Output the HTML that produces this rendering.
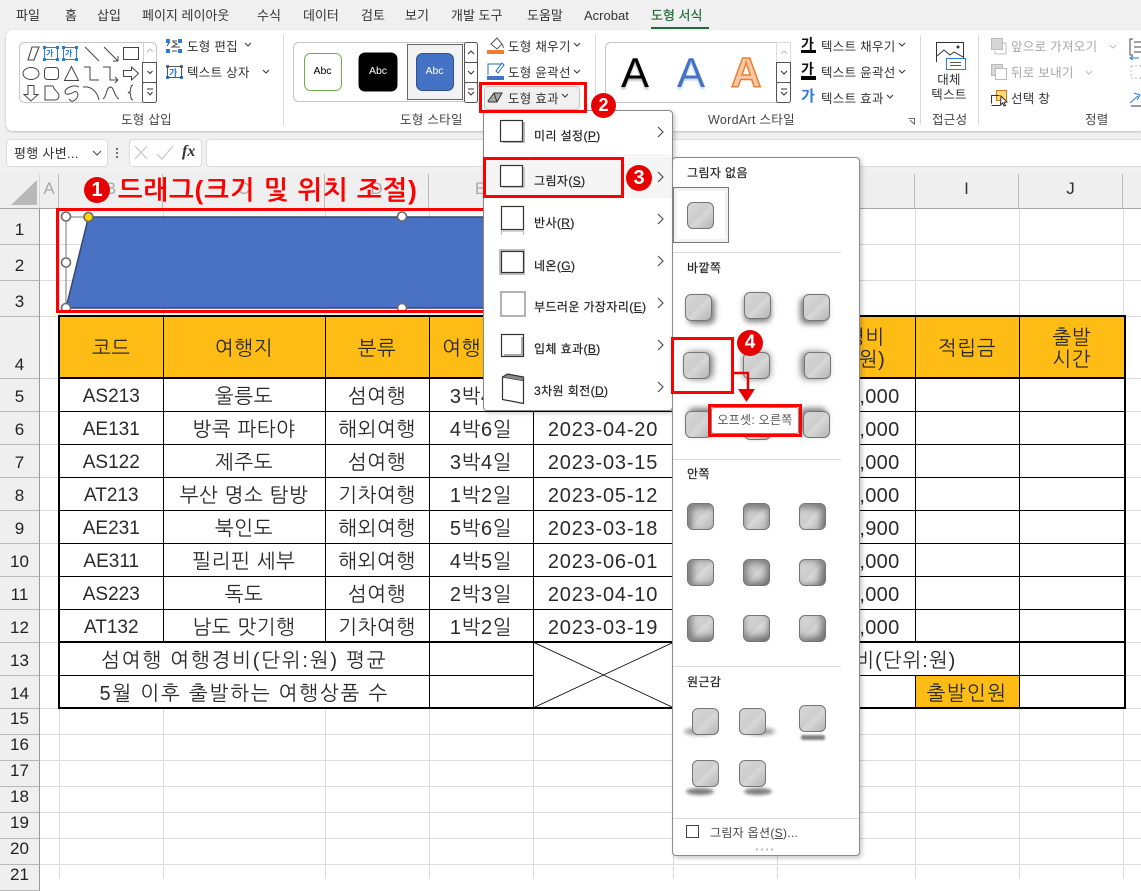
<!DOCTYPE html>
<html lang="ko"><head><meta charset="utf-8"><title>Excel</title>
<style>
*{box-sizing:border-box}
html,body{margin:0;padding:0}
body{width:1141px;height:879px;overflow:hidden;position:relative;background:#fff;font-family:"Liberation Sans","Noto Sans CJK KR",sans-serif;color:#333}
.a{position:absolute;white-space:nowrap}
.tab{position:absolute;top:7px;font-size:13px;line-height:18px;color:#333;white-space:nowrap}
.r{position:absolute;font-size:12.5px;line-height:16px;color:#333;white-space:nowrap;letter-spacing:.3px;margin-top:1px}
.lbl{position:absolute;top:112px;font-size:12.5px;line-height:16px;color:#444;white-space:nowrap;letter-spacing:.3px}
.dis{color:#a8a8a8}
.rh{position:absolute;left:0;width:40px;background:#efefef;border-bottom:1px solid #b8b8b8;border-right:1px solid #999;text-align:center;font-size:17px;color:#222;display:flex;align-items:center;justify-content:center;padding-top:3px}
.rt{padding-top:6px}
.rb{padding-top:0;padding-bottom:5px}
.ch{position:absolute;top:174px;height:34px;border-right:1px solid #bbb;text-align:center;font-size:17px;line-height:30px;color:#aaa}
table{position:absolute;left:58px;top:315px;width:1066px;border-collapse:collapse;table-layout:fixed;font-family:"Liberation Sans","NanumGothic","Noto Sans CJK KR",sans-serif;font-size:20px;color:#2a2a2a;background:#fff;border:2px solid #000;letter-spacing:.6px}
td{border:1px solid #000;text-align:center;padding:5px 0 0;height:33px;overflow:hidden;white-space:nowrap;line-height:22px}
tr.h td{height:62px;background:#FEBC14;padding-top:4px}
tr.h2 td{border-bottom:2px solid #000}
td.c{font-size:19px;letter-spacing:0}
td.d{letter-spacing:.8px}
td.n{text-align:right;padding-right:15px;letter-spacing:.3px}
td.w{letter-spacing:1.8px}
.menu{position:absolute;background:#fff;border:1px solid #8a8a8a;border-radius:4px;box-shadow:2px 2px 5px rgba(0,0,0,.22)}
.mt{position:absolute;left:534px;font-size:12px;line-height:16px;color:#222;white-space:nowrap;letter-spacing:.4px;-webkit-text-stroke:.2px #222}
.mt u{text-underline-offset:1px}
.sh{position:absolute;width:27px;height:27px;border:1.5px solid #757575;border-radius:6px;background:linear-gradient(135deg,#d8d8d8 0%,#cdcdcd 45%,#d8d8d8 55%,#b4b4b4 100%)}
.st{position:absolute;left:687px;font-size:12px;line-height:16px;color:#222;letter-spacing:.4px;-webkit-text-stroke:.2px #222;white-space:nowrap}
.sep{position:absolute;background:#d9d9d9;height:1px}
.badge{position:absolute;border-radius:50%;background:#e60000;color:#fff;font-weight:bold;text-align:center;font-family:"Liberation Sans",sans-serif}
</style></head><body>

<!-- top ribbon background -->
<div class="a" style="left:0;top:0;width:1141px;height:172px;background:#f0f0f0"></div>
<span class="tab" style="left:16px">파일</span>
<span class="tab" style="left:65px">홈</span>
<span class="tab" style="left:97px">삽입</span>
<span class="tab" style="left:142px">페이지 레이아웃</span>
<span class="tab" style="left:257px">수식</span>
<span class="tab" style="left:303px">데이터</span>
<span class="tab" style="left:361px">검토</span>
<span class="tab" style="left:405px">보기</span>
<span class="tab" style="left:451px">개발 도구</span>
<span class="tab" style="left:527px">도움말</span>
<span class="tab" style="left:584px">Acrobat</span>
<span class="tab" style="left:651px;color:#1f6b3a;-webkit-text-stroke:.2px #1f6b3a">도형 서식</span>
<div class="a" style="left:651px;top:27px;width:58px;height:2px;background:#1f6b3a"></div>

<div class="a" style="left:6px;top:30px;width:1140px;height:101px;background:#fff;border-radius:7px;box-shadow:0 1px 2px rgba(0,0,0,.2)"></div>

<!-- ribbon icons -->
<svg class="a" style="left:0;top:0" width="1141" height="135" viewBox="0 0 1141 135" fill="none" stroke="#444" stroke-width="1">
<rect x="19.5" y="42.5" width="137" height="60" rx="5" fill="#fff" stroke="#c6c6c6"/>
<path d="M143.5 43v59" stroke="#d0d0d0"/>
<rect x="142.5" y="62.5" width="14" height="20" stroke="#555" fill="#fff"/><rect x="142.5" y="82.5" width="14" height="20" rx="2" stroke="#555" fill="#fff"/>
<path d="M147 52l3-3 3 3" stroke="#bbb"/><path d="M147.500 71l2.500 2.500 2.500-2.500" stroke="#333"/><path d="M147 89h6M147.500 92l2.500 3 2.500-3" stroke="#333"/>
<path d="M28 60l4-13h7l-5 13z" stroke-width="1.1"/>
<rect x="44.500" y="47.500" width="13" height="12" stroke="#2b7cd3" stroke-width="1"/><rect x="63.500" y="47.500" width="13" height="12" stroke="#2b7cd3"/>
<path d="M85 47l14 14M104 47l14 14M118 61v-5M118 61h-5"/><rect x="123.500" y="47.500" width="15" height="12"/>
<ellipse cx="31" cy="73.500" rx="8" ry="6"/><rect x="44.500" y="67.500" width="14" height="12" rx="3"/>
<path d="M64.500 80.500l7-14 7 14z"/><path d="M84 67h6v13h9M103 67h7v13h8M118 80l-3-3M118 80l-3 3"/>
<path d="M123.500 70.500h8v-3.500l7 6.500-7 6.500v-3.500h-8z"/>
<path d="M28 85.500h6v9h4l-7 6.500-7-6.500h4z"/><path d="M45 100V86h8c1 4 5 6 6 9 0 4-2 5-4 5z"/>
<path d="M79 87c-5-3-14 1-14 5s6 2 9 0 6 3 2 7-5 2-7 0"/><path d="M83 87c8-1 14 4 16 13"/><path d="M103 99c4-3 3-11 7-12s4 10 9 12"/>
<path d="M133 85c-3 0-2 6-3 7l-2 .5 2 .5c1 1 0 7 3 7"/>
<g fill="#2b7cd3" stroke="none"><rect x="43" y="46" width="3" height="3"/><rect x="56" y="46" width="3" height="3"/><rect x="43" y="58" width="3" height="3"/><rect x="56" y="58" width="3" height="3"/><rect x="62" y="46" width="3" height="3"/><rect x="75" y="46" width="3" height="3"/><rect x="62" y="58" width="3" height="3"/><rect x="75" y="58" width="3" height="3"/>
<rect x="166" y="39" width="4" height="4"/><rect x="178" y="39" width="4" height="4"/><rect x="166" y="49" width="4" height="4"/><rect x="178" y="49" width="4" height="4"/>
<rect x="166" y="65" width="3" height="3"/><rect x="180" y="65" width="3" height="3"/><rect x="166" y="76" width="3" height="3"/><rect x="180" y="76" width="3" height="3"/></g>
<path d="M172 41h5M167 46l2-3M180 47h-8l5-3-4-2M172 51h5" stroke="#444"/><rect x="167.500" y="66.500" width="14" height="11" stroke="#555"/>
<path d="M245 43l3 3 3-3M263 70l3 3 3-3" stroke="#333"/>
<path d="M283.500 35v90M595.500 35v90M920.500 35v90M978.500 35v90" stroke="#d9d9d9"/>
<rect x="293.500" y="42.500" width="184" height="59" rx="5" stroke="#c6c6c6" fill="#fff"/>
<rect x="407.500" y="44.500" width="55" height="55" stroke="#666" fill="#f3f3f3"/>
<rect x="304.500" y="53.500" width="37" height="37" rx="6" fill="#fff" stroke="#70ad47"/>
<rect x="359" y="53" width="38" height="38" rx="6" fill="#000" stroke="#000"/>
<rect x="416.500" y="53.500" width="37" height="37" rx="6" fill="#4472c4" stroke="#2f528f"/>
<rect x="464.500" y="42.500" width="13" height="20" rx="2" fill="#fff" stroke="#555"/><rect x="464.500" y="62.500" width="13" height="20" fill="#fff" stroke="#555"/><rect x="464.500" y="82.500" width="13" height="20" rx="2" fill="#fff" stroke="#555"/>
<path d="M468 54l3-3 3 3M468 71l3 3 3-3M468 89h6M468 92l3 3 3-3" stroke="#333"/>
<path d="M491 44l6-6 5 6-5 5z" stroke="#555"/><path d="M502 44c1 2 2 3 1 4" stroke="#555"/><rect x="487" y="50" width="17" height="4" fill="#ed7d31" stroke="none"/>
<path d="M488 75V64h13M498 73l6-8-2-2-6 8z" stroke="#2b6cb8"/><rect x="487" y="76" width="17" height="4" fill="#4472c4" stroke="none"/>
<path d="M574 43l3 3 3-3M574 70l3 3 3-3" stroke="#333"/>
<rect x="605.500" y="42.500" width="185" height="60" rx="5" fill="#fff" stroke="#c6c6c6"/>
<rect x="776.500" y="42.500" width="14" height="20" fill="#fff" stroke="#ddd"/><rect x="776.500" y="62.500" width="14" height="20" fill="#fff" stroke="#555"/><rect x="776.500" y="82.500" width="14" height="20" rx="2" fill="#fff" stroke="#555"/>
<path d="M781 54l3-3 3 3" stroke="#bbb"/><path d="M781 71l3 3 3-3M781 89h6M781 92l3 3 3-3" stroke="#333"/>
<rect x="801" y="50" width="15" height="3" fill="#000" stroke="none"/><rect x="801" y="76" width="15" height="4" fill="#000" stroke="none"/>
<path d="M899 43l3 3 3-3M899 70l3 3 3-3M887 95l3 3 3-3" stroke="#333"/>
<path d="M908.500 118.500h6v6M910 120l4 4" stroke="#666"/>
<path d="M936.500 62V42.500h27V59" stroke="#333"/><path d="M937 56l7-6 6 5 4-3 9 5" stroke="#333"/><circle cx="958" cy="47" r="1.500" fill="#333" stroke="none"/>
<rect x="946.500" y="58.500" width="19" height="11" fill="#fff" stroke="#2b7cd3"/><path d="M950 62.500h11M950 65.500h11" stroke="#555"/>
<rect x="991.500" y="38.500" width="11" height="11" fill="#d6d6d6" stroke="#bcbcbc"/><path d="M1003 43h3v11h-11v-3" stroke="#bcbcbc"/>
<rect x="991.500" y="64.500" width="11" height="11" fill="#d6d6d6" stroke="#bcbcbc"/><rect x="995.500" y="68.500" width="11" height="11" fill="#fff" stroke="#bcbcbc"/>
<path d="M1110 45l3 3 3-3M1086 71l3 3 3-3" stroke="#bcbcbc"/>
<rect x="996.500" y="90.500" width="10" height="10" fill="#ffd97a" stroke="#d27b1d"/><path d="M991.500 103.500v-8h8M991.500 105.500h9" stroke="#333"/><path d="M1001 96l6 6-3 .5 1.500 3-1.500.5-1.500-3-2 2z" fill="#fff" stroke="#333"/>
<path d="M1133 39h-3v16h3M1134 42h7M1134 47h7M1134 52h7" stroke="#444"/><path d="M1130 58h9M1133 56l-3 2 3 2" stroke="#2b7cd3"/>
<path d="M1131 66h10M1131 78h10M1131 66v12" stroke="#bbb" stroke-dasharray="2 2"/>
<path d="M1130 103l8-7M1134 93l6 2-3 5" stroke="#2b7cd3"/><path d="M1131 106h10" stroke="#333"/>
</svg>

<span class="a" style="left:46px;top:48px;width:12px;font-size:8px;color:#2b7cd3;font-weight:bold">가</span>
<span class="a" style="left:65px;top:48px;width:12px;font-size:8px;color:#2b7cd3;font-weight:bold">가</span>
<span class="a" style="left:169px;top:66px;font-size:9px;color:#2b7cd3;font-weight:bold">가</span>

<span class="r" style="left:187px;top:38px">도형 편집</span>
<span class="r" style="left:187px;top:64px">텍스트 상자</span>
<span class="lbl" style="left:121px">도형 삽입</span>

<span class="a" style="left:304px;top:64px;width:37px;text-align:center;font-size:10.500px;color:#000;line-height:14px">Abc</span>
<span class="a" style="left:359px;top:64px;width:38px;text-align:center;font-size:10.500px;color:#fff;line-height:14px">Abc</span>
<span class="a" style="left:416px;top:64px;width:37px;text-align:center;font-size:10.500px;color:#fff;line-height:14px">Abc</span>
<span class="r" style="left:508px;top:38px">도형 채우기</span>
<span class="r" style="left:508px;top:64px">도형 윤곽선</span>
<span class="lbl" style="left:400px">도형 스타일</span>

<span class="a" style="left:620px;top:49px;width:30px;text-align:center;font-size:42px;line-height:48px;color:#000;text-shadow:0 2px 2px rgba(0,0,0,.3)">A</span>
<span class="a" style="left:676px;top:49px;width:30px;text-align:center;font-size:42px;line-height:48px;color:#4472c4;text-shadow:0 2px 2px rgba(68,114,196,.3)">A</span>
<span class="a" style="left:731px;top:49px;width:30px;text-align:center;font-size:42px;line-height:48px;color:#f8c9a4;-webkit-text-stroke:1.5px #ed7d31;font-weight:bold">A</span>
<span class="a" style="left:801px;top:37px;font-size:14px;line-height:15px;color:#111;font-weight:bold">가</span>
<span class="a" style="left:801px;top:62px;font-size:14px;line-height:15px;color:#111;font-weight:bold">가</span>
<span class="a" style="left:801px;top:89px;font-size:15px;line-height:16px;color:#2b7cd3;font-weight:bold">가</span>
<span class="r" style="left:821px;top:38px">텍스트 채우기</span>
<span class="r" style="left:821px;top:64px">텍스트 윤곽선</span>
<span class="r" style="left:821px;top:90px">텍스트 효과</span>
<span class="lbl" style="left:708px">WordArt 스타일</span>

<span class="r" style="left:925px;top:71px;width:48px;text-align:center">대체</span>
<span class="r" style="left:925px;top:86px;width:48px;text-align:center">텍스트</span>
<span class="lbl" style="left:932px">접근성</span>
<span class="r dis" style="left:1011px;top:38px">앞으로 가져오기</span>
<span class="r dis" style="left:1011px;top:64px">뒤로 보내기</span>
<span class="r" style="left:1011px;top:90px">선택 창</span>
<span class="lbl" style="left:1085px">정렬</span>

<!-- formula bar -->
<div class="a" style="left:6px;top:139px;width:102px;height:28px;background:#fff;border:1px solid #dcdcdc;border-radius:4px"></div>
<span class="a" style="left:14px;top:145px;font-size:13px;line-height:18px;color:#333;letter-spacing:.3px">평행 사변...</span>
<svg class="a" style="left:90px;top:148px" width="14" height="10" fill="none" stroke="#444"><path d="M3 3l4 4 4-4"/></svg>
<svg class="a" style="left:115px;top:146px" width="4" height="14"><circle cx="2" cy="3" r="1" fill="#444"/><circle cx="2" cy="7" r="1" fill="#444"/><circle cx="2" cy="11" r="1" fill="#444"/></svg>
<div class="a" style="left:129px;top:139px;width:73px;height:28px;background:#fff;border:1px solid #dcdcdc;border-radius:4px"></div>
<svg class="a" style="left:130px;top:142px" width="50" height="22" fill="none" stroke="#c4c4c4" stroke-width="1.200"><path d="M5 4l12 13M17 4L5 17M27 12l5 5 11-13"/></svg>
<span class="a" style="left:182px;top:142px;font-family:'Liberation Serif',serif;font-style:italic;font-weight:bold;font-size:16px;line-height:20px;color:#333">fx</span>
<div class="a" style="left:206px;top:139px;width:940px;height:28px;background:#fff;border:1px solid #dcdcdc;border-radius:4px"></div>

<!-- column headers -->
<div class="a" style="left:0;top:172px;width:1141px;height:37px;background:#efefef;border-bottom:1px solid #a8a8a8"></div>
<svg class="a" style="left:0;top:172px" width="40" height="36"><path d="M11 33L37 8v25z" fill="#b8b8b8"/><path d="M40 2v34" stroke="#c0c0c0"/></svg>
<div class="ch" style="left:40px;width:19px">A</div>
<div class="ch" style="left:59px;width:104px">B</div>
<div class="ch" style="left:163px;width:162px">C</div>
<div class="ch" style="left:325px;width:104px">D</div>
<div class="ch" style="left:429px;width:104px">E</div>
<div class="ch" style="left:777px;width:138px;color:#333">H</div>
<div class="ch" style="left:915px;width:104px;color:#333">I</div>
<div class="ch" style="left:1019px;width:104px;color:#333">J</div>

<!-- grid -->
<svg class="a" style="left:0;top:209px" width="1141" height="670" fill="none" stroke="#dcdcdc">
<path d="M0 35.500h1141M0 71.500h1141M0 107.500h1141M0 169.500h1141M0 202.500h1141M0 235.500h1141M0 268.500h1141M0 301.500h1141M0 334.500h1141M0 367.500h1141M0 400.500h1141M0 433.500h1141M0 466.500h1141M0 499.500h1141M0 525.500h1141M0 551.500h1141M0 577.500h1141M0 603.500h1141M0 629.500h1141M0 655.500h1141"/>
<path d="M59.500 0v670M163.500 0v670M325.500 0v670M429.500 0v670M533.500 0v670M673.500 0v670M777.500 0v670M915.500 0v670M1019.500 0v670M1123.500 0v670"/>
</svg>

<!-- row headers -->
<div class="rh rt" style="top:209px;height:36px">1</div>
<div class="rh rt" style="top:245px;height:36px">2</div>
<div class="rh rt" style="top:281px;height:36px">3</div>
<div class="rh" style="top:317px;height:62px;align-items:flex-end;padding-top:0;padding-bottom:3px">4</div>
<div class="rh" style="top:379px;height:33px">5</div>
<div class="rh" style="top:412px;height:33px">6</div>
<div class="rh" style="top:445px;height:33px">7</div>
<div class="rh" style="top:478px;height:33px">8</div>
<div class="rh" style="top:511px;height:33px">9</div>
<div class="rh" style="top:544px;height:33px">10</div>
<div class="rh" style="top:577px;height:33px">11</div>
<div class="rh" style="top:610px;height:33px">12</div>
<div class="rh" style="top:643px;height:33px">13</div>
<div class="rh" style="top:676px;height:33px">14</div>
<div class="rh rb" style="top:709px;height:26px">15</div>
<div class="rh rb" style="top:735px;height:26px">16</div>
<div class="rh rb" style="top:761px;height:26px">17</div>
<div class="rh rb" style="top:787px;height:26px">18</div>
<div class="rh rb" style="top:813px;height:26px">19</div>
<div class="rh rb" style="top:839px;height:26px">20</div>
<div class="rh rb" style="top:865px;height:26px">21</div>

<!-- table -->
<table>
<colgroup><col style="width:104px"><col style="width:162px"><col style="width:104px"><col style="width:104px"><col style="width:140px"><col style="width:104px"><col style="width:138px"><col style="width:104px"><col style="width:106px"></colgroup>
<tr class="h h2"><td>코드</td><td>여행지</td><td>분류</td><td>여행기간</td><td>출발일</td><td>인원</td><td>여행경비<br>(단위:원)</td><td>적립금</td><td>출발<br>시간</td></tr>
<tr><td class="c">AS213</td><td>울릉도</td><td>섬여행</td><td>3박4일</td><td class="d">2023-04-20</td><td>20</td><td class="n">550,000</td><td></td><td></td></tr>
<tr><td class="c">AE131</td><td>방콕 파타야</td><td>해외여행</td><td>4박6일</td><td class="d">2023-04-20</td><td>20</td><td class="n">850,000</td><td></td><td></td></tr>
<tr><td class="c">AS122</td><td>제주도</td><td>섬여행</td><td>3박4일</td><td class="d">2023-03-15</td><td>20</td><td class="n">650,000</td><td></td><td></td></tr>
<tr><td class="c">AT213</td><td>부산 명소 탐방</td><td>기차여행</td><td>1박2일</td><td class="d">2023-05-12</td><td>20</td><td class="n">250,000</td><td></td><td></td></tr>
<tr><td class="c">AE231</td><td>북인도</td><td>해외여행</td><td>5박6일</td><td class="d">2023-03-18</td><td>20</td><td class="n">850,900</td><td></td><td></td></tr>
<tr><td class="c">AE311</td><td>필리핀 세부</td><td>해외여행</td><td>4박5일</td><td class="d">2023-06-01</td><td>20</td><td class="n">750,000</td><td></td><td></td></tr>
<tr><td class="c">AS223</td><td>독도</td><td>섬여행</td><td>2박3일</td><td class="d">2023-04-10</td><td>20</td><td class="n">550,000</td><td></td><td></td></tr>
<tr class="h2"><td class="c">AT132</td><td>남도 맛기행</td><td>기차여행</td><td>1박2일</td><td class="d">2023-03-19</td><td>20</td><td class="n">350,000</td><td></td><td></td></tr>
<tr><td colspan="3" class="w">섬여행 여행경비(단위:원) 평균</td><td></td><td rowspan="2"></td><td colspan="3" style="padding-left:14px;letter-spacing:1px">최고 여행경비(단위:원)</td><td></td></tr>
<tr><td colspan="3" class="w">5월 이후 출발하는 여행상품 수</td><td></td><td colspan="2"></td><td style="background:#FEBC14;letter-spacing:1.4px">출발인원</td><td></td></tr>
</table>
<svg class="a" style="left:533px;top:642px" width="141" height="66"><path d="M0 0L141 66M141 0L0 66" stroke="#000" stroke-width=".8"/></svg>

<!-- shape -->
<svg class="a" style="left:50px;top:205px" width="440" height="112" fill="none">
<path d="M38.500 12L16 103H440V12z" fill="#4a72c4"/>
<path d="M440 12H38.500L16 103H440" stroke="#35486e" stroke-width="1.500"/>
<path d="M16 12V103M16 12H38" stroke="#777"/>
<g fill="#fff" stroke="#6a6a6a" stroke-width="1.600"><circle cx="16" cy="11.500" r="4.500"/><circle cx="16" cy="57.500" r="4.500"/><circle cx="16" cy="103" r="4.500"/><circle cx="352" cy="11.500" r="4.500"/><circle cx="352" cy="103" r="4.500"/></g>
<circle cx="38.500" cy="12" r="4.500" fill="#ffd500" stroke="#6a6a6a" stroke-width="1.600"/>
</svg>
<div class="a" style="left:56px;top:208px;width:440px;height:105px;border:3px solid #f00"></div>

<!-- annotation -->
<span class="a" style="left:118px;top:173px;font-size:26px;line-height:34px;font-weight:bold;letter-spacing:1.1px;color:#f00;font-family:'Liberation Sans','NanumGothic','Noto Sans CJK KR',sans-serif;">드래그(크기 및 위치 조절)</span>
<div class="badge" style="left:84px;top:177px;width:26px;height:26px;font-size:20px;line-height:26px">1</div>

<!-- effect button -->
<div class="a" style="left:484px;top:86px;width:96px;height:24px;background:#f0f0f0;border:1px solid #c4c4c4;border-radius:4px"></div>
<svg class="a" style="left:487px;top:90px" width="17" height="16" fill="none" stroke="#333"><path d="M1 11l6-8h8l-5 9H2z" fill="#aaa"/><path d="M7 3l3 9"/></svg>
<span class="r" style="left:508px;top:90px">도형 효과</span>
<svg class="a" style="left:561px;top:92px" width="10" height="8" fill="none" stroke="#333"><path d="M1 2l3 3 3-3"/></svg>

<!-- first menu -->
<div class="menu" style="left:483px;top:110px;width:190px;height:301px"></div>
<div class="a" style="left:479px;top:82px;width:108px;height:31px;border:3px solid #f00"></div>
<div class="badge" style="left:591px;top:93px;width:25px;height:25px;font-size:18px;line-height:25px">2</div>
<div class="a" style="left:484px;top:157px;width:188px;height:41px;background:#f5f5f5"></div>
<div class="sep" style="left:530px;top:155px;width:140px;background:#eee"></div>
<svg class="a" style="left:495px;top:115px" width="36" height="292" fill="none" stroke="#333" stroke-width="1.200">
<rect x="8" y="7" width="22" height="21" fill="#bbb" stroke="none"/><rect x="5.500" y="5.500" width="22" height="21" fill="#fff"/>
<rect x="8" y="52" width="22" height="21" fill="#ccc" stroke="none"/><rect x="5.500" y="50.500" width="22" height="21" fill="#fff"/>
<rect x="6.500" y="91.500" width="22" height="23" fill="#fff"/><path d="M6.500 120v-4h22v4" stroke="#bbb"/>
<rect x="4" y="134" width="26" height="26" fill="#bdbdbd" stroke="none"/><rect x="6.500" y="136.500" width="22" height="21" fill="#fff"/>
<rect x="6" y="177" width="24" height="24" fill="#fff" stroke="#b2b2b2" stroke-width="2"/>
<rect x="6.500" y="219.500" width="22" height="22" fill="#fff"/><path d="M27 222v18H9" stroke="#aaa" stroke-width="2"/>
<path d="M7.500 262l21 3.500v23l-21-4z" fill="#fff"/><path d="M7.500 262l5-3 16 3v3.500" fill="#888"/>
</svg>
<span class="mt" style="top:128px">미리 설정(<u>P</u>)</span>
<span class="mt" style="top:173px">그림자(<u>S</u>)</span>
<span class="mt" style="top:215px">반사(<u>R</u>)</span>
<span class="mt" style="top:258px">네온(<u>G</u>)</span>
<span class="mt" style="top:299px">부드러운 가장자리(<u>E</u>)</span>
<span class="mt" style="top:341px">입체 효과(<u>B</u>)</span>
<span class="mt" style="top:383px">3차원 회전(<u>D</u>)</span>
<svg class="a" style="left:656px;top:120px" width="10" height="280" fill="none" stroke="#444" stroke-width="1.100"><path d="M2 7l5 5-5 5M2 52l5 5-5 5M2 94l5 5-5 5M2 136l5 5-5 5M2 178l5 5-5 5M2 220l5 5-5 5M2 262l5 5-5 5"/></svg>
<div class="a" style="left:483px;top:157px;width:141px;height:41px;border:3px solid #f00"></div>
<div class="badge" style="left:626px;top:165px;width:26px;height:26px;font-size:20px;line-height:26px">3</div>

<!-- submenu -->
<div class="menu" style="left:672px;top:157px;width:188px;height:699px"></div>
<span class="st" style="top:165px">그림자 없음</span>
<div class="a" style="left:673px;top:187px;width:56px;height:56px;border:1px solid #777;background:#fff;box-shadow:inset 0 0 0 3px #f2f2f2"></div>
<div class="sh" style="left:687px;top:202px"></div>
<div class="sep" style="left:673px;top:252px;width:168px"></div>
<span class="st" style="top:260px">바깥쪽</span>
<div class="sh" style="left:685px;top:294px;box-shadow:3px 3px 6px rgba(0,0,0,.5)"></div>
<div class="sh" style="left:744px;top:292px;box-shadow:0 3px 6px rgba(0,0,0,.5)"></div>
<div class="sh" style="left:803px;top:294px;box-shadow:-3px 3px 6px rgba(0,0,0,.5)"></div>
<div class="sh" style="left:683px;top:352px;box-shadow:3px 0 7px rgba(0,0,0,.5)"></div>
<div class="sh" style="left:743px;top:352px;box-shadow:0 0 7px rgba(0,0,0,.5)"></div>
<div class="sh" style="left:804px;top:352px;box-shadow:-3px 0 7px rgba(0,0,0,.5)"></div>
<div class="sh" style="left:685px;top:411px;box-shadow:3px -3px 6px rgba(0,0,0,.5)"></div>
<div class="sh" style="left:744px;top:413px;box-shadow:0 -3px 6px rgba(0,0,0,.5)"></div>
<div class="sh" style="left:803px;top:411px;box-shadow:-3px -3px 6px rgba(0,0,0,.5)"></div>
<div class="a" style="left:671px;top:337px;width:63px;height:57px;border:3px solid #f00"></div>
<div class="badge" style="left:737px;top:330px;width:26px;height:26px;font-size:19px;line-height:26px">4</div>
<svg class="a" style="left:734px;top:370px" width="24" height="34"><path d="M0 3h14v17" fill="none" stroke="#e60000" stroke-width="2.500"/><path d="M4 19h17l-8.500 13z" fill="#e60000"/></svg>
<div class="a" style="left:711px;top:407px;width:88px;height:27px;background:#fff;border:1px solid #888;border-radius:3px;text-align:center;font-size:12px;line-height:25px;color:#555;letter-spacing:.3px">오프셋: 오른쪽</div>
<div class="a" style="left:708px;top:404px;width:94px;height:33px;border:3px solid #f00"></div>

<div class="sep" style="left:673px;top:459px;width:168px"></div>
<span class="st" style="top:466px">안쪽</span>
<div class="sh" style="left:687px;top:503px;box-shadow:inset 4px 4px 7px rgba(0,0,0,.4)"></div>
<div class="sh" style="left:743px;top:503px;box-shadow:inset 0 5px 7px rgba(0,0,0,.4)"></div>
<div class="sh" style="left:799px;top:503px;box-shadow:inset -4px 4px 7px rgba(0,0,0,.4)"></div>
<div class="sh" style="left:687px;top:559px;box-shadow:inset 5px 0 7px rgba(0,0,0,.4)"></div>
<div class="sh" style="left:743px;top:559px;box-shadow:inset 0 0 9px 2px rgba(0,0,0,.5)"></div>
<div class="sh" style="left:799px;top:559px;box-shadow:inset -5px 0 7px rgba(0,0,0,.4)"></div>
<div class="sh" style="left:687px;top:615px;box-shadow:inset 4px -4px 7px rgba(0,0,0,.4)"></div>
<div class="sh" style="left:743px;top:615px;box-shadow:inset 0 -5px 7px rgba(0,0,0,.4)"></div>
<div class="sh" style="left:799px;top:615px;box-shadow:inset -4px -4px 7px rgba(0,0,0,.4)"></div>

<div class="sep" style="left:673px;top:666px;width:168px"></div>
<span class="st" style="top:674px">원근감</span>
<div class="a" style="left:684px;top:728px;width:30px;height:7px;border-radius:50%;background:rgba(0,0,0,.4);filter:blur(2px)"></div>
<div class="a" style="left:745px;top:728px;width:30px;height:7px;border-radius:50%;background:rgba(0,0,0,.4);filter:blur(2px)"></div>
<div class="a" style="left:801px;top:735px;width:24px;height:5px;border-radius:2px;background:rgba(0,0,0,.5);filter:blur(1px)"></div>
<div class="a" style="left:686px;top:788px;width:28px;height:7px;border-radius:50%;background:rgba(0,0,0,.5);filter:blur(1.500px)"></div>
<div class="a" style="left:744px;top:788px;width:28px;height:7px;border-radius:50%;background:rgba(0,0,0,.5);filter:blur(1.500px)"></div>
<div class="sh" style="left:692px;top:708px"></div>
<div class="sh" style="left:739px;top:708px"></div>
<div class="sh" style="left:799px;top:705px"></div>
<div class="sh" style="left:692px;top:760px"></div>
<div class="sh" style="left:739px;top:760px"></div>

<div class="sep" style="left:673px;top:818px;width:185px"></div>
<div class="a" style="left:686px;top:825px;width:13px;height:13px;border:1.300px solid #444;background:#fff"></div>
<span class="a" style="left:710px;top:825px;font-size:12px;line-height:16px;color:#444;letter-spacing:.3px">그림자 옵션(<u>S</u>)...</span>
<svg class="a" style="left:755px;top:848px" width="20" height="3"><path d="M1 1.500h2M6 1.500h2M11 1.500h2M16 1.500h2" stroke="#bbb" stroke-width="2"/></svg>
</body></html>
